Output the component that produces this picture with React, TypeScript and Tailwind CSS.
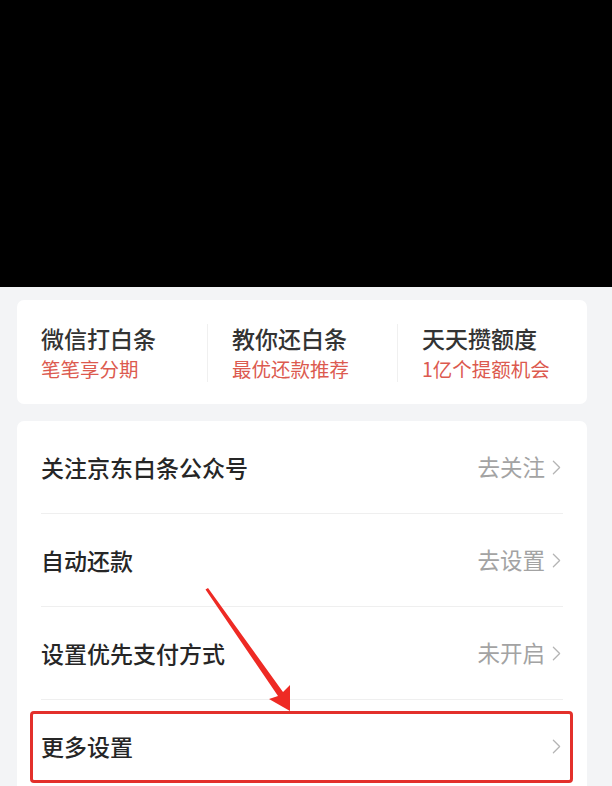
import { ChevronRight } from "lucide-react";

const promos = [
  { title: "微信打白条", sub: "笔笔享分期" },
  { title: "教你还白条", sub: "最优还款推荐" },
  { title: "天天攒额度", sub: "1亿个提额机会" },
];

const rows = [
  { label: "关注京东白条公众号", action: "去关注" },
  { label: "自动还款", action: "去设置" },
  { label: "设置优先支付方式", action: "未开启" },
  { label: "更多设置", action: "" },
];

const font = { fontFamily: '"Noto Sans CJK SC", "Noto Sans", sans-serif' };

export default function App() {
  return (
    <div className="relative h-[786px] w-[612px] overflow-hidden bg-[#f3f4f6]" style={font}>
      <div className="h-[287px] bg-black" />

      <div className="pt-[13px] pr-[25px] pl-[17px]">
        <div className="grid h-[104px] grid-cols-3 rounded-[7px] bg-white pt-[24px] pb-[22px]">
          {promos.map((p, i) => (
            <div
              key={p.title}
              className={`flex flex-col gap-[5px] pl-6 ${i > 0 ? "border-l border-[#f0f0f0]" : ""}`}
            >
              <span className="text-[23px] leading-[28px] font-medium text-[#333]">{p.title}</span>
              <span className="text-[19.5px] leading-[24px] text-[#dc5a4f]">{p.sub}</span>
            </div>
          ))}
        </div>

        <div className="mt-[17px] rounded-[7px] bg-white px-6">
          {rows.map((r, i) => (
            <div key={r.label}>
              {i > 0 && <div className="h-px bg-[#efefef]" />}
              <div className="flex h-[92px] items-center justify-between">
                <span className="text-[23px] font-medium text-[#262626]">{r.label}</span>
                <span className="flex items-center text-[22.5px] text-[#a3a3a3]">
                  {r.action}
                  <ChevronRight className="-mr-[6px] ml-[-1px] h-[25px] w-[25px] text-[#b5b5b5]" strokeWidth={1.2} />
                </span>
              </div>
            </div>
          ))}
        </div>
      </div>

      {/* annotation: box around the last row */}
      <div className="absolute top-[711px] left-[30px] h-[72px] w-[543px] rounded-[4px] border-[3px] border-[#e3302b]" />
      <svg className="absolute inset-0" width="612" height="786" viewBox="0 0 612 786">
        <polygon
          points="205.5,589.5 208,588 283,692 290,685 290,711 269,699 278,696"
          fill="#ee2a24"
        />
      </svg>
    </div>
  );
}
